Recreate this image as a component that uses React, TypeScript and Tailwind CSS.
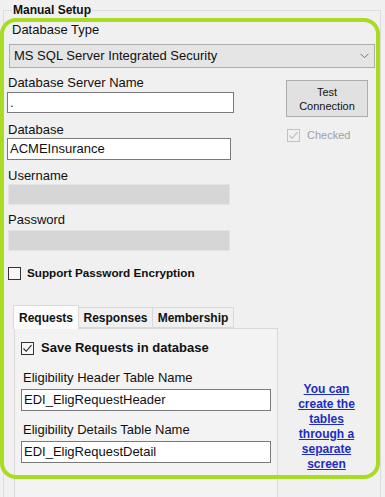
import React from "react";

const font = { fontFamily: '"Liberation Sans", Arial, sans-serif' };

const CheckMark = ({ color }: { color: string }) => (
  <svg width="11" height="11" viewBox="0 0 11 11" className="block">
    <path d="M1.5 5.5 L4.2 8.3 L9.5 2.2" fill="none" stroke={color} strokeWidth="1.1" />
  </svg>
);

const Box = ({ checked, disabled }: { checked?: boolean; disabled?: boolean }) => (
  <div
    className={
      "w-[13px] h-[13px] border flex items-center justify-center shrink-0 " +
      (disabled ? "border-[#c2c2c2] bg-[#f0f0f0]" : "border-[#333333] bg-[#f7f7f7]")
    }
  >
    {checked && <CheckMark color={disabled ? "#bcbcbc" : "#222222"} />}
  </div>
);

const Label = ({ text, className = "" }: { text: string; className?: string }) => (
  <div className={"text-[13px] leading-[16px] text-[#111] " + className}>{text}</div>
);

const TextBox = ({ value, className = "" }: { value: string; className?: string }) => (
  <div
    className={
      "bg-white border border-[#7a7a7a] text-[13px] leading-[16px] text-[#111] px-[2px] flex items-center " +
      className
    }
  >
    {value}
  </div>
);

const DisabledBox = ({ className = "" }: { className?: string }) => (
  <div className={"bg-[#d6d6d6] border border-[#e4e4e4] " + className} />
);

const App = () => {
  return (
    <div className="relative w-[385px] h-[497px] bg-[#f0f0f0] overflow-hidden" style={font}>
      {/* group box */}
      <div className="ml-[3px] mr-[4px] mt-[10px] h-[520px] border border-[#dcdcdc]">
        <div className="-mt-[8px] ml-[8px] w-fit px-[1px] bg-[#f0f0f0] text-[12px] leading-[14px] font-bold text-[#111]">
          Manual Setup
        </div>

        <div className="pl-[4px] pr-[5px]">
          <Label text="Database Type" className="mt-[5px] ml-[4px]" />
          <div className="mt-[6px] ml-[1px] h-[24px] bg-[#e5e5e5] border border-[#adadad] flex items-center justify-between pl-[4px] pr-[5px]">
            <span className="text-[13px] leading-[16px] text-[#111]">MS SQL Server Integrated Security</span>
            <svg width="9" height="6" viewBox="0 0 9 6">
              <path d="M0.5 0.8 L4.5 4.8 L8.5 0.8" fill="none" stroke="#707070" strokeWidth="1" />
            </svg>
          </div>

          <div className="flex">
            <div className="w-[227px] -ml-[1px]">
              <Label text="Database Server Name" className="mt-[7px] ml-[1px]" />
              <TextBox value="." className="mt-[1px] h-[21px] w-[227px]" />
              <Label text="Database" className="mt-[9px] ml-[1px]" />
              <TextBox value="ACMEInsurance" className="h-[22px] w-[224px]" />
              <Label text="Username" className="mt-[8px] ml-[1px]" />
              <DisabledBox className="ml-[1px] h-[21px] w-[222px]" />
              <Label text="Password" className="mt-[7px] ml-[1px]" />
              <DisabledBox className="mt-[2px] ml-[1px] h-[21px] w-[222px]" />
            </div>
            <div className="ml-[52px] pt-[12px]">
              <div className="w-[82px] h-[37px] bg-[#e1e1e1] border border-[#adadad] flex flex-col items-center justify-center text-[11px] leading-[14px] text-[#111]">
                <span>Test</span>
                <span>Connection</span>
              </div>
              <div className="mt-[11px] ml-[1px] flex items-center gap-[7px]">
                <Box checked disabled />
                <span className="text-[11px] leading-[14px] text-[#a0a0a0]">Checked</span>
              </div>
            </div>
          </div>

          <div className="mt-[15px] flex items-center gap-[6px]">
            <Box />
            <span className="text-[11.7px] leading-[14px] font-bold text-[#111]">Support Password Encryption</span>
          </div>

          <div className="mt-[24px] flex">
            {/* tab control */}
            <div className="ml-[5px] w-[265px]">
              <div className="flex items-end h-[24px] text-[12px] leading-[14px] font-bold text-[#111]">
                <div className="h-[24px] w-[66px] bg-[#fbfbfb] border border-b-0 border-[#d9d9d9] flex items-center justify-center -mb-px relative z-10">
                  Requests
                </div>
                <div className="h-[21px] w-[74px] border border-l-0 border-[#d9d9d9] flex items-center justify-center">
                  Responses
                </div>
                <div className="h-[21px] w-[81px] border border-l-0 border-[#d9d9d9] flex items-center justify-center">
                  Membership
                </div>
              </div>
              <div className="h-[200px] ml-[1px] border border-[#d9d9d9] bg-[#f3f3f3] pl-[6px]">
                <div className="mt-[11px] flex items-center gap-[7px]">
                  <Box checked />
                  <span className="text-[13px] leading-[16px] font-bold text-[#111]">Save Requests in database</span>
                </div>
                <Label text="Eligibility Header Table Name" className="mt-[14px] ml-[2px]" />
                <TextBox value="EDI_EligRequestHeader" className="mt-[3px] h-[22px] w-[250px]" />
                <Label text="Eligibility Details Table Name" className="mt-[11px] ml-[2px]" />
                <TextBox value="EDI_EligRequestDetail" className="mt-[3px] h-[22px] w-[250px]" />
              </div>
            </div>
            <div className="flex-1 flex justify-center pt-[78px]">
              <div className="text-center text-[12px] leading-[15px] font-bold underline text-[#1b2dc4] w-[70px]">
                You can create the tables through a separate screen
              </div>
            </div>
          </div>
        </div>
      </div>

      {/* green highlight annotation */}
      <div className="pointer-events-none absolute left-0 top-[18px] w-[380px] h-[461px] border-[4px] border-[#a8dc22] rounded-[16px]" />
    </div>
  );
};

export default App;
